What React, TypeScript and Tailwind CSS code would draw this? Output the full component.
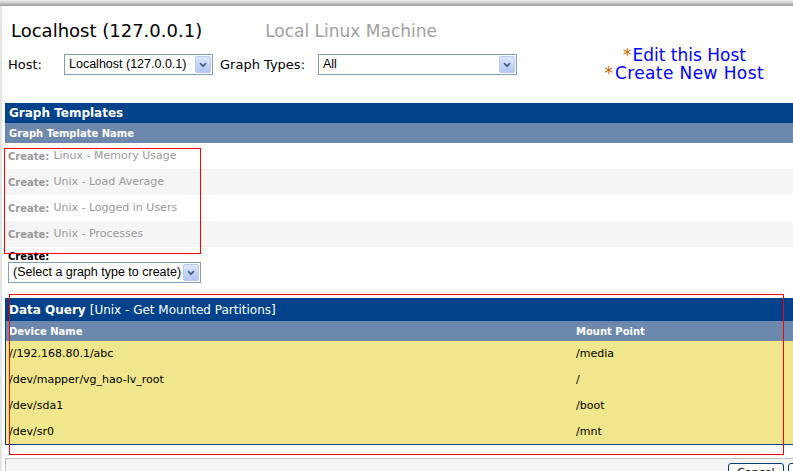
import React from "react";

const font = { fontFamily: '"DejaVu Sans", Verdana, sans-serif' };
const selFont = { fontFamily: '"Liberation Sans", Arial, sans-serif' };

function Select({ label, width }: { label: string; width: string }) {
  return (
    <div className={`flex h-[21px] shrink-0 items-center border border-[#7f9db9] bg-white ${width}`}>
      <span className="flex-1 whitespace-nowrap pl-[4px] text-[12.5px] leading-none text-black" style={selFont}>
        {label}
      </span>
      <span className="mr-[1px] flex h-[17px] w-[16px] items-center justify-center rounded-[2px] border border-[#b9c9ef] bg-gradient-to-b from-[#dde7fd] to-[#b2c6f4]">
        <svg width="8" height="6" viewBox="0 0 8 6">
          <path d="M1 1.2 L4 4.2 L7 1.2" fill="none" stroke="#4d6185" strokeWidth="1.8" />
        </svg>
      </span>
    </div>
  );
}

const templates = [
  "Linux - Memory Usage",
  "Unix - Load Average",
  "Unix - Logged in Users",
  "Unix - Processes",
];

const rows = [
  ["//192.168.80.1/abc", "/media"],
  ["/dev/mapper/vg_hao-lv_root", "/"],
  ["/dev/sda1", "/boot"],
  ["/dev/sr0", "/mnt"],
];

export default function App() {
  return (
    <div className="relative h-[471px] w-[793px] overflow-hidden bg-white" style={font}>
      <div className="h-[6px] bg-gradient-to-b from-[#f0f0f0] via-[#c8c8c8] to-[#9a9a9a]" />
      <div className="h-[465px] border-l-2 border-[#e4e4e4]">
        {/* header */}
        <div className="flex h-[68px] items-start">
          <div className="flex flex-col">
            <div className="flex items-baseline pl-[9px] pt-[14px]">
              <span className="text-[18px] leading-[22px] text-black">Localhost (127.0.0.1)</span>
              <span className="ml-[63px] text-[17px] leading-[22px] text-[#a0a0a0]">Local Linux Machine</span>
            </div>
            <div className="mt-[12px] flex items-center pl-[6px] text-[13px] text-black">
              <span className="w-[56px]">Host:</span>
              <Select label="Localhost (127.0.0.1)" width="w-[149px]" />
              <span className="ml-[7px] w-[98px]">Graph Types:</span>
              <Select label="All" width="w-[199px]" />
            </div>
          </div>
          <div className="ml-auto mr-[29px] flex flex-col items-end pt-[40px] text-[17px] leading-[18px] text-[#0000ff]">
            <div className="pr-[18px]">
              <span className="mr-[1px] text-[#c86400]">*</span>Edit this Host
            </div>
            <div>
              <span className="mr-[2px] text-[#c86400]">*</span>
              <span className="tracking-[0.4px]">Create New Host</span>
            </div>
          </div>
        </div>

        {/* Graph templates */}
        <div className="ml-[3px] mt-[29px]">
          <div className="flex h-[20px] items-center bg-[#00438c] pl-[4px] text-[12px] font-bold text-white">
            Graph Templates
          </div>
          <div className="flex h-[20px] items-center bg-[#6d88ad] pl-[4px] text-[10px] font-bold text-white">
            Graph Template Name
          </div>
          {templates.map((t, i) => (
            <div
              key={t}
              className={`flex h-[26px] items-center pl-[3px] pt-[1px] text-[11px] text-[#999999] ${i % 2 ? "bg-[#f5f5f5]" : "bg-white"}`}
            >
              <span className="text-[10px] font-bold">Create:</span>
              <span className="ml-[4px]">{t}</span>
            </div>
          ))}
          <div className="pl-[3px] pt-[4px] text-[10px] font-bold leading-[11px] text-black">Create:</div>
          <div className="pl-[3px]">
            <Select label="(Select a graph type to create)" width="w-[193px]" />
          </div>
        </div>

        {/* Data query */}
        <div className="ml-[3px] mt-[15px] border-b border-l border-[#00438c]">
          <div className="flex h-[23px] items-center bg-[#00438c] pl-[3px] text-[12px] text-white">
            <span className="font-bold">Data Query</span>
            <span className="ml-[4px]">[Unix - Get Mounted Partitions]</span>
          </div>
          <div className="flex h-[20px] items-center bg-[#6d88ad] pl-[3px] text-[10px] font-bold text-white">
            <span className="w-[567px]">Device Name</span>
            <span>Mount Point</span>
          </div>
          {rows.map(([d, m], i) => (
            <div
              key={d}
              className={`flex items-center bg-[#f0e68c] pl-[3px] pt-[1px] text-[11px] text-black ${i === 3 ? "h-[25px]" : "h-[26px]"}`}
            >
              <span className="w-[567px]">{d}</span>
              <span>{m}</span>
            </div>
          ))}
        </div>

        {/* bottom bar */}
        <div className="ml-[3px] mt-[13px] flex h-[20px] items-start border-l border-t border-[#c0c0c0] bg-[#f5f5f5] pl-[722px] pt-[4px]">
          <div className="flex h-[22px] w-[56px] shrink-0 items-start justify-center rounded-[3px] border border-[#003c74] bg-gradient-to-b from-white to-[#ecebe6] pt-[1px] text-[11px] text-black">
            Cancel
          </div>
          <div className="ml-[4px] flex h-[22px] w-[60px] shrink-0 items-start justify-center rounded-[3px] border border-[#003c74] bg-gradient-to-b from-white to-[#ecebe6] pt-[1px] text-[11px] text-black">
            Create
          </div>
        </div>
      </div>

      {/* red annotation boxes */}
      <div className="pointer-events-none absolute left-[4px] top-[148px] h-[106px] w-[197px] border border-[#ff0000]" />
      <div className="pointer-events-none absolute left-[9px] top-[294px] h-[161px] w-[775px] border border-[#ff0000]" />
    </div>
  );
}
